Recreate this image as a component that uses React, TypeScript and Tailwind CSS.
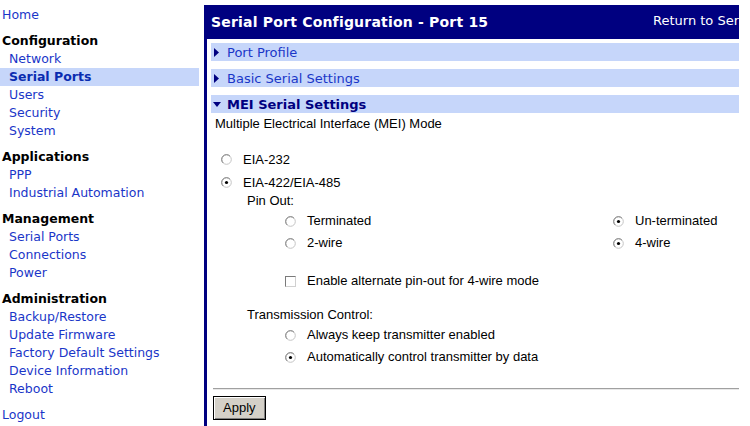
import React from 'react';

const verdana = "font-['DejaVu_Sans',Verdana,sans-serif]";
const tahoma = "font-['Liberation_Sans',Tahoma,Arial,sans-serif]";

type NavGroup = { title: string; links: { label: string; active?: boolean }[] };

const groups: NavGroup[] = [
  {
    title: 'Configuration',
    links: [{ label: 'Network' }, { label: 'Serial Ports', active: true }, { label: 'Users' }, { label: 'Security' }, { label: 'System' }],
  },
  { title: 'Applications', links: [{ label: 'PPP' }, { label: 'Industrial Automation' }] },
  { title: 'Management', links: [{ label: 'Serial Ports' }, { label: 'Connections' }, { label: 'Power' }] },
  {
    title: 'Administration',
    links: [
      { label: 'Backup/Restore' },
      { label: 'Update Firmware' },
      { label: 'Factory Default Settings' },
      { label: 'Device Information' },
      { label: 'Reboot' },
    ],
  },
];

const Radio = ({ checked = false }: { checked?: boolean }) => (
  <svg width="11" height="11" viewBox="0 0 11 11" className="shrink-0">
    <circle cx="5.5" cy="5.5" r="4.8" fill="#fff" stroke="#c4c4c4" strokeWidth="1" />
    <path d="M2.1 8.9 A4.8 4.8 0 0 1 8.9 2.1" fill="none" stroke="#808080" strokeWidth="1" />
    {checked && <circle cx="5.5" cy="5.5" r="1.6" fill="#000" />}
  </svg>
);

const Checkbox = () => (
  <span className="block w-[11px] h-[11px] shrink-0 bg-white border border-[#7a7a7a] border-r-[#d0d0d0] border-b-[#d0d0d0]" />
);

const SectionBar = ({ label, open = false }: { label: string; open?: boolean }) => (
  <div className="h-[18px] bg-[#c6d6fa] flex items-center pl-[2px]">
    {open ? (
      <svg width="9" height="9" viewBox="0 0 9 9" className="shrink-0 mr-[5px]">
        <path d="M0 2 L8 2 L4 7 Z" fill="#000080" />
      </svg>
    ) : (
      <svg width="9" height="9" viewBox="0 0 9 9" className="shrink-0 mr-[5px]">
        <path d="M1 0 L6 4.5 L1 9 Z" fill="#000080" />
      </svg>
    )}
    <span className={`${verdana} text-[13px] whitespace-nowrap pt-[1px] ${open ? 'font-bold text-[#000080]' : 'text-[#1a36c8]'}`}>
      {label}
    </span>
  </div>
);

const Option = ({ label, checked, h = 'h-[22px]' }: { label: string; checked?: boolean; h?: string }) => (
  <div className={`flex items-center gap-[11px] ${h}`}>
    <Radio checked={checked} />
    <span className="text-[13px] text-black whitespace-nowrap">{label}</span>
  </div>
);

export default function App() {
  return (
    <div className="flex w-[750px] h-[426px] bg-white overflow-hidden">
      {/* Left navigation */}
      <nav className={`${verdana} w-[204px] shrink-0 pt-[6px] text-[12.5px] leading-[18px]`}>
        <div className="pl-[2px] text-[#1a36c8]">Home</div>
        {groups.map((g) => (
          <div key={g.title} className="mt-[8px]">
            <div className="pl-[2px] font-bold text-black">{g.title}</div>
            {g.links.map((l) => (
              <div
                key={l.label}
                className={`pl-[9px] w-[199px] ${l.active ? 'bg-[#c6d6fa] font-bold text-[#0a2cb0]' : 'text-[#1a36c8]'}`}
              >
                {l.label}
              </div>
            ))}
          </div>
        ))}
        <div className="mt-[8px] pl-[2px] text-[#1a36c8]">Logout</div>
      </nav>

      {/* Main content */}
      <main className="w-[535px] shrink-0 mt-[5px] border-l-[3px] border-[#000080] overflow-hidden">
        <div className="h-[34px] bg-[#000080] flex items-center pl-[4px] text-white">
          <span className={`${verdana} font-bold text-[14px] tracking-[0.2px] whitespace-nowrap pt-[1px]`}>
            Serial Port Configuration - Port 15
          </span>
          <span className={`${verdana} ml-auto w-[86px] shrink-0 overflow-hidden text-[13px] whitespace-nowrap mb-[3px]`}>
            Return to Serial Ports
          </span>
        </div>

        <div className="pl-[4px] pt-[4px] flex flex-col gap-[8px]">
          <SectionBar label="Port Profile" />
          <SectionBar label="Basic Serial Settings" />
          <SectionBar label="MEI Serial Settings" open />
        </div>

        <div className={`${tahoma} pl-[4px]`}>
          <div className="pl-[4px] h-[22px] flex items-center text-[13px] text-black">
            Multiple Electrical Interface (MEI) Mode
          </div>

          <div className="pl-[10px] mt-[13px]">
            <Option label="EIA-232" h="h-[23px]" />
            <Option label="EIA-422/EIA-485" checked h="h-[23px]" />
          </div>

          <div className="pl-[36px] h-[14px] flex items-center text-[13px] text-black">Pin Out:</div>

          <div className="pl-[74px] mt-[2px] grid grid-cols-[328px_auto]">
            <Option label="Terminated" />
            <Option label="Un-terminated" checked />
            <Option label="2-wire" />
            <Option label="4-wire" checked />
          </div>

          <div className="pl-[74px] mt-[16px] h-[22px] flex items-center gap-[11px]">
            <Checkbox />
            <span className="text-[13px] text-black whitespace-nowrap">Enable alternate pin-out for 4-wire mode</span>
          </div>

          <div className="pl-[36px] mt-[14px] h-[18px] flex items-center text-[13px] text-black">Transmission Control:</div>

          <div className="pl-[74px]">
            <Option label="Always keep transmitter enabled" />
            <Option label="Automatically control transmitter by data" checked />
          </div>

          <div className="mt-[20px] ml-[2px] border-t border-[#a0a0a0] border-b border-b-[#e8e8e8]" />

          <div className="ml-[2px] mt-[5px]">
            <button className="h-[24px] px-[9px] bg-[#d4d0c8] border border-black text-[13px] text-black shadow-[inset_1px_1px_0_#fff,inset_-1px_-1px_0_#808080]">
              Apply
            </button>
          </div>
        </div>
      </main>
    </div>
  );
}
